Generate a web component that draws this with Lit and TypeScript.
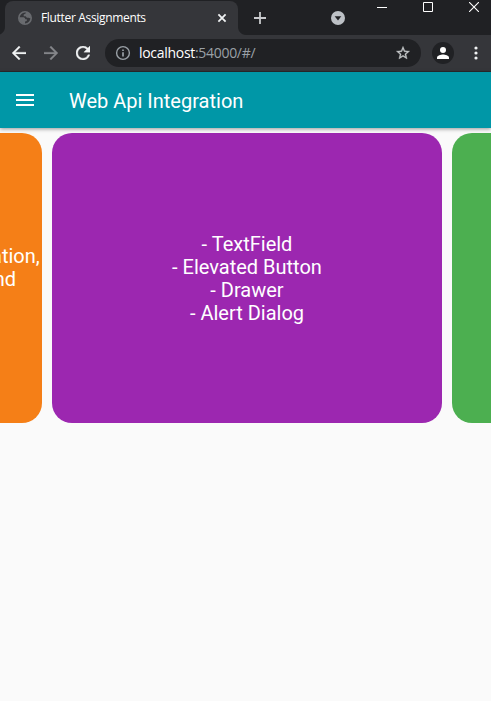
import { LitElement, html, css } from "lit";
import { customElement } from "lit/decorators.js";

@customElement("browser-tabs")
class BrowserTabs extends LitElement {
  static styles = css`
    :host { display: flex; height: 35px; background: #202124; box-sizing: border-box; padding-left: 5px; }
    .tab { position: relative; width: 233px; height: 34px; margin-top: 1px; background: #35363a; border-radius: 8px 8px 0 0; display: flex; align-items: center; box-sizing: border-box; padding: 0 11px 0 13px; }
    .tab::before, .tab::after { content: ""; position: absolute; bottom: 0; width: 8px; height: 8px; }
    .tab::before { left: -8px; background: radial-gradient(circle at 0 0, transparent 7.5px, #35363a 8.5px); }
    .tab::after { right: -8px; background: radial-gradient(circle at 100% 0, transparent 7.5px, #35363a 8.5px); }
    .name { margin-left: 9px; flex: 1; font: 12px/16px "Open Sans", sans-serif; letter-spacing: -0.33px; color: #fff; white-space: nowrap; }
    svg { display: block; flex: none; }
    .plus { margin: 12px 0 0 16px; }
    .search { margin: 11px 0 0 65px; }
    .window { display: flex; margin: 2px 0 0 32px; gap: 36px; }
  `;
  render() {
    return html`
      <div class="tab">
        <svg width="14" height="14" viewBox="0 0 14 14">
          <circle cx="7" cy="7" r="6.2" fill="#35363a" stroke="#696b6f" stroke-width="1.6" />
          <path d="M1 6.3H5.6Q7.3 6.7 7.3 8.3H8.8V10L7 10.6V13L4.5 12.8 1.5 10ZM8.2 1 7.6 2.6 5.7 3.5V5.2H7.6L8.9 6.7H10.6L12.8 7.5 13 5 11 2Z" fill="#696b6f" />
        </svg>
        <span class="name">Flutter Assignments</span>
        <svg width="10" height="10" viewBox="0 0 10 10" fill="none" stroke="#f1f3f4" stroke-width="1.8"><path d="M1.4 1.4 8.6 8.6M8.6 1.4 1.4 8.6" /></svg>
      </div>
      <svg class="plus" width="12" height="12" viewBox="0 0 12 12" fill="none" stroke="#c8cacd" stroke-width="1.8"><path d="M6 0V12M0 6H12" /></svg>
      <svg class="search" width="14" height="14" viewBox="0 0 14 14"><circle cx="7" cy="7" r="7" fill="#bdc1c6" /><path d="M3.7 5.2H10.3L7 9.6Z" fill="#202124" /></svg>
      <div class="window">
        <svg width="10" height="11" viewBox="0 0 10 11"><path d="M0 5.5H10" stroke="#fff" /></svg>
        <svg width="10" height="10" viewBox="0 0 10 10"><path d="M.5 .5H9.5V9.5H.5Z" fill="none" stroke="#fff" /></svg>
        <svg width="10" height="10" viewBox="0 0 10 10"><path d="M0 0 10 10M10 0 0 10" stroke="#fff" stroke-width="1.1" /></svg>
      </div>
    `;
  }
}

@customElement("browser-toolbar")
class BrowserToolbar extends LitElement {
  static styles = css`
    :host { display: flex; align-items: center; height: 37px; box-sizing: border-box; background: #35363a; padding: 0 8px 1px 12px; border-bottom: 1px solid #292b2e; }
    svg { display: block; flex: none; }
    .nav { display: flex; gap: 18px; }
    .address { display: flex; align-items: center; width: 316px; height: 28px; margin-left: 15px; border-radius: 14px; background: #202124; box-sizing: border-box; padding: 0 10px 0 10px; }
    .url { flex: 1; margin-left: 8px; font: 14px/20px "Open Sans", sans-serif; letter-spacing: -0.3px; color: #fff; white-space: nowrap; }
    .path { color: #9aa0a6; }
    .profile { width: 22px; height: 22px; border-radius: 50%; background: #202124; margin-left: 11px; display: flex; align-items: center; justify-content: center; }
    .more { margin-left: 17.5px; }
  `;
  render() {
    return html`
      <div class="nav">
        <svg width="14" height="14" viewBox="4 4 16 16" fill="#f1f3f4" stroke="#f1f3f4" stroke-width=".3"><path d="M20 11H7.83l5.59-5.59L12 4l-8 8 8 8 1.41-1.41L7.83 13H20v-2z" /></svg>
        <svg width="14" height="14" viewBox="4 4 16 16" fill="#85868a" stroke="#85868a" stroke-width=".3"><path d="M4 11h12.17l-5.59-5.59L12 4l8 8-8 8-1.41-1.41L16.17 13H4v-2z" /></svg>
        <svg width="14" height="14" viewBox="4 4 16 16" fill="#f1f3f4" stroke="#f1f3f4" stroke-width=".4"><path d="M17.65 6.35A7.958 7.958 0 0 0 12 4c-4.42 0-7.99 3.58-7.99 8s3.57 8 7.99 8c3.73 0 6.84-2.55 7.73-6h-2.08A5.99 5.99 0 0 1 12 18c-3.31 0-6-2.69-6-6s2.69-6 6-6c1.66 0 3.14.69 4.22 1.78L13 11h7V4l-2.35 2.35z" /></svg>
      </div>
      <div class="address">
        <svg width="16" height="16" viewBox="0 0 16 16"><circle cx="8" cy="8" r="6.4" fill="none" stroke="#9aa0a6" stroke-width="1.4" /><path d="M8 7.2V11.4M8 4.5V6" stroke="#9aa0a6" stroke-width="1.7" /></svg>
        <span class="url">localhost<span class="path">:54000/#/</span></span>
        <svg width="16" height="16" viewBox="0 0 24 24"><path d="m22 9.24-7.19-.62L12 2 9.19 8.63 2 9.24l5.46 4.73L5.82 21 12 17.27 18.18 21l-1.63-7.03L22 9.24zM12 15.4l-3.76 2.27 1-4.28-3.32-2.88 4.38-.38L12 6.1l1.71 4.04 4.38.38-3.32 2.88 1 4.28L12 15.4z" fill="#c4c7c9" stroke="#c4c7c9" stroke-width=".5" /></svg>
      </div>
      <div class="profile"><svg width="12" height="12" viewBox="0 0 12 12" fill="#fff"><circle cx="6" cy="3" r="3" /><path d="M0 12V10.5C0 8.5 4 7.5 6 7.5S12 8.5 12 10.5V12Z" /></svg></div>
      <svg class="more" width="8" height="14" viewBox="0 0 8 14" fill="#f1f3f4"><circle cx="4" cy="2" r="1.6" /><circle cx="4" cy="7" r="1.6" /><circle cx="4" cy="12" r="1.6" /></svg>
    `;
  }
}

@customElement("app-root")
class AppRoot extends LitElement {
  static styles = css`
    :host { display: flex; flex-direction: column; width: 491px; height: 701px; overflow: hidden; background: #fafafa; font-family: Roboto, sans-serif; }
    .bar { position: relative; flex: none; display: flex; align-items: center; height: 56px; box-sizing: border-box; padding: 0 16px; background: #0097a7; color: #fff; box-shadow: 0 1px 4px rgba(0, 0, 0, .4); }
    .title { margin: 1px 0 0 35px; font-size: 20px; line-height: 24px; font-weight: 400; }
    .cards { display: flex; gap: 10px; margin-left: -348px; padding-top: 5px; }
    .card { flex: none; width: 390px; height: 290px; border-radius: 20px; box-sizing: border-box; display: flex; align-items: center; justify-content: center; text-align: center; white-space: pre; color: #fff; font-size: 20px; line-height: 23px; padding-top: 2px; }
    .orange { background: #f57f17; }
    .orange .lines { margin-top: -23px; width: 386px; }
    .first { text-align: right; padding-right: 0.3px; }
    .second { text-align: right; padding-right: 24px; }
    .purple { background: #9c27b0; }
    .green { background: #4caf50; }
  `;
  render() {
    const topics = ["- TextField", "- Elevated Button", "- Drawer", "- Alert Dialog"];
    return html`
      <browser-tabs></browser-tabs>
      <browser-toolbar></browser-toolbar>
      <header class="bar">
        <svg width="18" height="12" viewBox="0 0 18 12" fill="#fff"><path d="M0 0H18V2H0ZM0 5H18V7H0ZM0 10H18V12H0Z" /></svg>
        <span class="title">Web Api Integration</span>
      </header>
      <main class="cards">
        <section class="card orange"><div class="lines"><div class="first">ation,</div><div class="second">nd</div></div></section>
        <section class="card purple"><div>${topics.map((t) => html`<div>${t}</div>`)}</div></section>
        <section class="card green"></section>
      </main>
    `;
  }
}
